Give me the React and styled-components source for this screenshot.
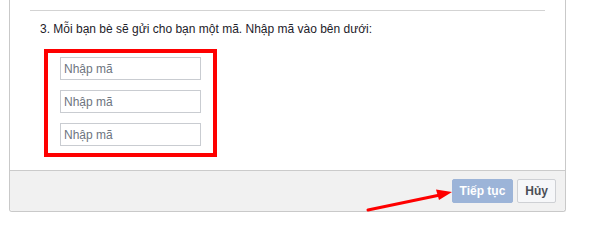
import styled, { createGlobalStyle } from "styled-components";

const GlobalStyle = createGlobalStyle`
	html, body {
		margin: 0;
		padding: 0;
		background: #fff;
		font-family: "Liberation Sans", Arial, Helvetica, sans-serif;
	}
`;

const Page = styled.div`
	position: relative;
	width: 598px;
	height: 244px;
	overflow: hidden;
	background: #fff;
`;

const Dialog = styled.div`
	margin-left: 9px;
	width: 555px;
	border: 1px solid #c9c9c9;
	border-top: none;
	border-radius: 0 0 3px 3px;
	background: #fff;
`;

const Body = styled.div`
	padding: 10px 20px 13px 20px;
`;

const Divider = styled.hr`
	margin: 0;
	border: none;
	border-top: 1px solid #d3d3d3;
`;

const Step = styled.p`
	margin: 10px 0 0 10px;
	font-size: 12px;
	line-height: 16px;
	color: #1d2129;
`;

const Highlight = styled.div`
	margin: 12px 0 0 14px;
	width: 141px;
	padding: 4px 12px 7px 12px;
	border: 4px solid #fe0000;
	display: flex;
	flex-direction: column;
	gap: 10px;
`;

const CodeInput = styled.input`
	box-sizing: border-box;
	width: 141px;
	height: 23px;
	margin: 0;
	padding: 0 3px;
	border: 1px solid #c9ccd1;
	font-family: "Liberation Sans", Arial, sans-serif;
	font-size: 12px;
	color: #1d2129;
	outline: none;

	&::placeholder {
		color: #6e7580;
	}
`;

const Footer = styled.div`
	display: flex;
	justify-content: flex-end;
	gap: 4px;
	padding: 8px 9px 8px 10px;
	background: #f1f1f1;
	border-top: 1px solid #cbcbcb;
	border-radius: 0 0 3px 3px;
`;

const Button = styled.button`
	box-sizing: border-box;
	height: 24px;
	min-width: ${(p) => (p.$primary ? "59px" : "37px")};
	padding: 0 7px;
	border: 1px solid ${(p) => (p.$primary ? "#9cb4d8" : "#ced0d4")};
	border-radius: 2px;
	background: ${(p) => (p.$primary ? "#9cb4d8" : "#f6f7f9")};
	color: ${(p) => (p.$primary ? "#fff" : "#4b4f56")};
	font-family: "Liberation Sans", Arial, sans-serif;
	font-size: 12px;
	font-weight: bold;
	line-height: 22px;
`;

const Arrow = styled.svg`
	position: absolute;
	left: 0;
	top: 0;
	pointer-events: none;
`;

export default function App() {
	return (
		<Page>
			<GlobalStyle />
			<Dialog>
				<Body>
					<Divider />
					<Step>3. Mỗi bạn bè sẽ gửi cho bạn một mã. Nhập mã vào bên dưới:</Step>
					<Highlight>
						{[0, 1, 2].map((i) => (
							<CodeInput key={i} placeholder="Nhập mã" />
						))}
					</Highlight>
				</Body>
				<Footer>
					<Button $primary>Tiếp tục</Button>
					<Button>Hủy</Button>
				</Footer>
			</Dialog>
			<Arrow width="598" height="244">
				<line x1="368" y1="210" x2="440" y2="195" stroke="#fe0000" strokeWidth="3" strokeLinecap="round" />
				<polygon points="452,192 436,189.5 439,200" fill="#fe0000" />
			</Arrow>
		</Page>
	);
}
